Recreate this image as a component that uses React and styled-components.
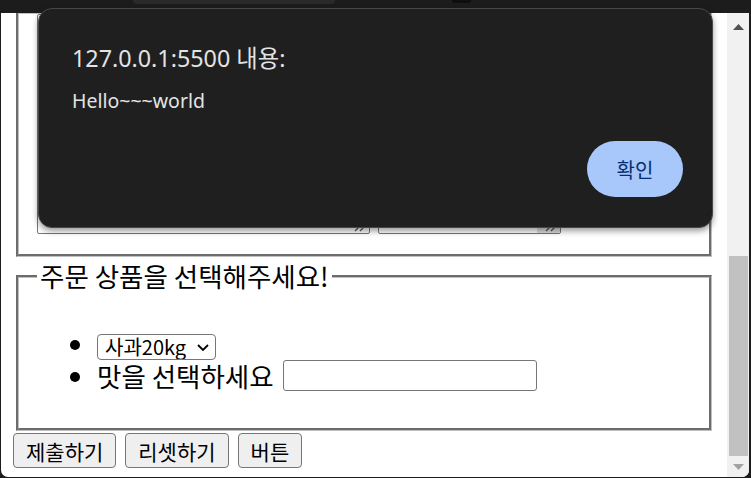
import styled, { createGlobalStyle } from "styled-components";

const GlobalStyle = createGlobalStyle`
  html, body {
    margin: 0;
    padding: 0;
    background: #1c1c1c;
    overflow: hidden;
  }
  #root {
    width: 751px;
    height: 478px;
  }
`;

const Window = styled.div`
  position: relative;
  width: 751px;
  height: 478px;
  display: flex;
  flex-direction: column;
  background: #1c1c1c;
  font-family: "Noto Sans CJK KR", "Noto Sans", sans-serif;
`;

const TopBar = styled.div`
  height: 13px;
  flex-shrink: 0;
  display: flex;
  align-items: flex-start;
`;

const TabPill = styled.div`
  margin-left: 133px;
  width: 202px;
  height: 4px;
  background: #2a2a2a;
  border-radius: 0 0 10px 10px;
`;

const Dot = styled.div`
  margin-left: 117px;
  width: 19px;
  height: 3px;
  background: #0e0e0e;
  border-radius: 0 0 9px 9px;
`;

const Viewport = styled.div`
  flex: 1;
  min-height: 0;
  display: flex;
  margin: 0 2px 1px 1px;
  background: #fff;
  border-radius: 0 0 7px 7px;
  overflow: hidden;
`;

const Page = styled.div`
  flex: 1;
  min-width: 0;
  overflow: hidden;
  display: flex;
  flex-direction: column;
  justify-content: flex-end;
  padding: 0 12px 9px;
`;

const Fieldset = styled.fieldset`
  flex-shrink: 0;
  min-width: 0;
  margin: ${({ $top }) => $top || 0}px 3px 0;
  border: 3px groove rgb(192, 192, 192);
  padding: ${({ $pad }) => $pad};
`;

const Legend = styled.legend`
  padding: 0 3px;
  font-size: 26.5px;
  line-height: 32px;
  color: #000;
`;

const AreaRow = styled.div`
  display: flex;
  align-items: flex-end;
  gap: 8px;
`;

const FakeArea = styled.div`
  position: relative;
  width: ${({ $w }) => $w}px;
  height: 220px;
  box-sizing: border-box;
  border: 1px solid #767676;
  border-radius: 2px;
  background: #fff;
  display: flex;
  justify-content: flex-end;
`;

const SideStrip = styled.div`
  width: 23px;
  background: #dcdcdc;
`;

const Grip = styled.svg`
  position: absolute;
  right: 2px;
  bottom: 1px;
`;

const List = styled.ul`
  margin: 24px 0 25px;
  padding-left: 60px;
  font-size: 26.5px;
  color: #000;
`;

const Item = styled.li`
  height: 32px;
`;

const ItemRow = styled.div`
  display: flex;
  align-items: center;
  height: 100%;
  gap: 9px;
`;

const SelectWrap = styled.div`
  position: relative;
  display: inline-flex;
`;

const Select = styled.select`
  appearance: none;
  width: 119px;
  height: 26px;
  box-sizing: border-box;
  padding: 0 26px 0 7px;
  font-family: inherit;
  font-size: 20px;
  line-height: 24px;
  border: 1px solid #767676;
  border-radius: 4px;
  background: #fff;
  color: #000;
`;

const Chevron = styled.svg`
  position: absolute;
  right: 7px;
  top: 50%;
  margin-top: -3px;
  pointer-events: none;
`;

const TextInput = styled.input`
  width: 254px;
  height: 31px;
  box-sizing: border-box;
  border: 1px solid #767676;
  border-radius: 3px;
  font-size: 20px;
`;

const ButtonRow = styled.div`
  display: flex;
  gap: 9px;
  margin-top: 2px;
`;

const Btn = styled.button`
  height: 35px;
  padding: 0 12px;
  font-family: inherit;
  font-size: 21px;
  color: #000;
  background: #efefef;
  border: 1px solid #767676;
  border-radius: 4px;
`;

const ScrollBar = styled.div`
  width: 22px;
  flex-shrink: 0;
  background: #f1f1f1;
  display: flex;
  flex-direction: column;
  align-items: center;
`;

const ArrowBox = styled.div`
  height: ${({ $h }) => $h}px;
  display: flex;
  align-items: center;
  justify-content: center;
  flex-shrink: 0;
`;

const Track = styled.div`
  flex: 1;
  align-self: stretch;
  display: flex;
  flex-direction: column;
  justify-content: flex-end;
  padding: 0 1px 1px 2px;
`;

const Thumb = styled.div`
  height: 200px;
  background: #c1c1c1;
`;

const Dialog = styled.div`
  position: absolute;
  left: 38px;
  top: 8px;
  width: 675px;
  height: 220px;
  box-sizing: border-box;
  background: #1f1f1f;
  border: 1px solid #474747;
  border-radius: 14px;
  box-shadow: 0 3px 6px rgba(0, 0, 0, 0.4);
  padding: 35px 29px 30px 33px;
  display: flex;
  flex-direction: column;
  font-family: "Noto Sans", "Noto Sans CJK KR", sans-serif;
`;

const DialogTitle = styled.div`
  font-size: 23.3px;
  line-height: 28px;
  color: #e3e3e3;
`;

const DialogText = styled.div`
  margin-top: 17px;
  font-size: 19.5px;
  line-height: 24px;
  color: #e3e3e3;
`;

const OkButton = styled.button`
  margin-top: auto;
  align-self: flex-end;
  width: 96px;
  height: 56px;
  border: none;
  border-radius: 28px;
  background: #a8c7fa;
  color: #062e6f;
  font-family: "Noto Sans CJK KR", sans-serif;
  font-size: 20px;
`;

const GripIcon = () => (
  <Grip width="14" height="8" viewBox="0 0 14 8">
    <path d="M2 7 L8 1 M7 7 L13 1" stroke="#555" strokeWidth="1.3" fill="none" />
  </Grip>
);

export default function App() {
  return (
    <>
      <GlobalStyle />
      <Window>
        <TopBar>
          <TabPill />
          <Dot />
        </TopBar>
        <Viewport>
          <Page>
            <Fieldset $pad="0 18px 20px">
              <AreaRow>
                <FakeArea $w={333}>
                  <GripIcon />
                </FakeArea>
                <FakeArea $w={183}>
                  <SideStrip />
                  <GripIcon />
                </FakeArea>
              </AreaRow>
            </Fieldset>
            <Fieldset $top={3} $pad="8px 18px 15px">
              <Legend>주문 상품을 선택해주세요!</Legend>
              <List>
                <Item>
                  <ItemRow>
                    <SelectWrap>
                      <Select defaultValue="apple">
                        <option value="apple">사과20kg</option>
                      </Select>
                      <Chevron width="12" height="7" viewBox="0 0 12 7">
                        <path d="M1 1 L6 6 L11 1" stroke="#000" strokeWidth="1.8" fill="none" />
                      </Chevron>
                    </SelectWrap>
                  </ItemRow>
                </Item>
                <Item>
                  <ItemRow>
                    맛을 선택하세요
                    <TextInput type="text" />
                  </ItemRow>
                </Item>
              </List>
            </Fieldset>
            <ButtonRow>
              <Btn>제출하기</Btn>
              <Btn>리셋하기</Btn>
              <Btn>버튼</Btn>
            </ButtonRow>
          </Page>
          <ScrollBar>
            <ArrowBox $h={27}>
              <svg width="11" height="6" viewBox="0 0 11 6">
                <polygon points="0,6 5.5,0 11,6" fill="#505050" />
              </svg>
            </ArrowBox>
            <Track>
              <Thumb />
            </Track>
            <ArrowBox $h={20}>
              <svg width="11" height="6" viewBox="0 0 11 6">
                <polygon points="0,0 5.5,6 11,0" fill="#a3a3a3" />
              </svg>
            </ArrowBox>
          </ScrollBar>
        </Viewport>
        <Dialog>
          <DialogTitle>127.0.0.1:5500 내용:</DialogTitle>
          <DialogText>Hello~~~world</DialogText>
          <OkButton>확인</OkButton>
        </Dialog>
      </Window>
    </>
  );
}
